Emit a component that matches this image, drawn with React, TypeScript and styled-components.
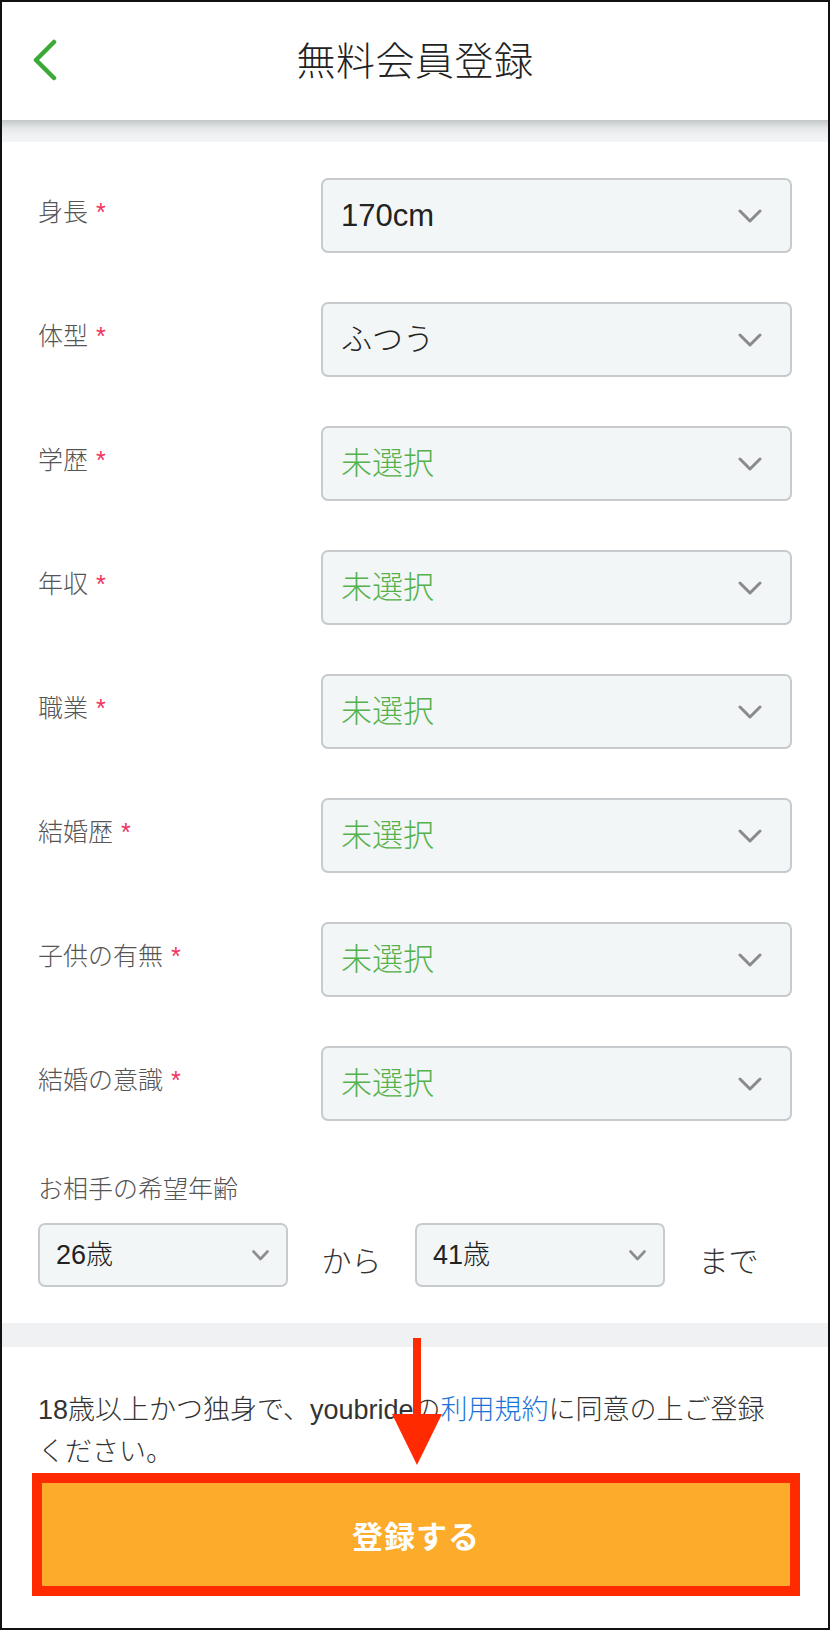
import styled, { createGlobalStyle } from 'styled-components'

const GlobalStyle = createGlobalStyle`
  * {
    box-sizing: border-box;
  }
  body {
    margin: 0;
    background: #fff;
    font-family: 'Liberation Sans', 'Noto Sans CJK JP', sans-serif;
  }
`

const Frame = styled.div`
  position: relative;
  width: 830px;
  height: 1630px;
  border: 2px solid #111;
  background: #fff;
  display: flex;
  flex-direction: column;
  overflow: hidden;
`

const Header = styled.header`
  height: 118px;
  display: grid;
  grid-template-columns: 1fr auto 1fr;
  align-items: center;
  padding-bottom: 6px;
`

const BackButton = styled.button`
  justify-self: start;
  margin-left: 29px;
  margin-top: 4px;
  padding: 0;
  border: none;
  background: none;
  display: flex;
`

const Title = styled.h1`
  margin: 0;
  font-size: 39px;
  font-weight: 300;
  color: #222;
  letter-spacing: 0.5px;
`

const ShadowBand = styled.div`
  height: 22px;
  background: linear-gradient(#c3c7c8 0%, #e3e6e7 35%, #eff1f2 70%, #f3f4f5 100%);
`

const Form = styled.div`
  padding: 36px 36px 0;
  display: grid;
  grid-template-columns: 283px 1fr;
  row-gap: 49px;
`

const Label = styled.div`
  align-self: center;
  padding-bottom: 6px;
  font-size: 25px;
  font-weight: 300;
  line-height: 1;
  color: #555;
`

const Required = styled.span`
  margin-left: 8px;
  color: #f0325c;
`

const Select = styled.div<{ $size: 'lg' | 'sm' }>`
  height: ${(p) => (p.$size === 'lg' ? '75px' : '64px')};
  display: flex;
  align-items: center;
  justify-content: space-between;
  padding: ${(p) => (p.$size === 'lg' ? '0 28px 0 18px' : '0 17px 0 16px')};
  background: #f3f6f7;
  border: 2px solid #c7cbce;
  border-radius: 7px;
`

const SelectValue = styled.span<{ $size: 'lg' | 'sm'; $empty?: boolean }>`
  font-size: ${(p) => (p.$size === 'lg' ? '31px' : '27px')};
  font-weight: 300;
  color: ${(p) => (p.$empty ? '#55b14b' : '#222')};
  line-height: 1;
`

const AgeSection = styled.div`
  padding: 50px 36px 36px;
  display: flex;
  flex-direction: column;
  gap: 16px;
`

const AgeLabel = styled.div`
  font-size: 25px;
  font-weight: 300;
  line-height: 36px;
  color: #555;
`

const AgeRow = styled.div`
  display: grid;
  grid-template-columns: 250px 1fr 250px 1fr;
  align-items: center;
`

const Joiner = styled.span`
  text-align: center;
  font-size: 30px;
  font-weight: 300;
  color: #333;
  padding-top: 8px;
`

const GrayBand = styled.div`
  height: 24px;
  background: #f0f1f3;
`

const Notice = styled.p`
  margin: 0;
  padding: 42px 36px 0;
  font-size: 27px;
  font-weight: 300;
  line-height: 42px;
  color: #333;
`

const TermsLink = styled.a`
  color: #1a74d8;
  text-decoration: none;
`

const SubmitButton = styled.button`
  margin: 0 28px 0 30px;
  height: 123px;
  border: 10px solid #ff2a00;
  background: #fcab2a;
  color: #fff;
  font-family: 'Liberation Sans', 'Noto Sans CJK JP', sans-serif;
  font-size: 31px;
  font-weight: 700;
  letter-spacing: 1px;
`

const Arrow = styled.svg`
  position: absolute;
  left: 390px;
  top: 1336px;
`

function Chevron({ small }: { small?: boolean }) {
  return small ? (
    <svg width="17" height="11" viewBox="0 0 17 11">
      <polyline points="1.5,1.5 8.5,9 15.5,1.5" fill="none" stroke="#8d8d8d" strokeWidth="2.6" strokeLinecap="round" strokeLinejoin="round" />
    </svg>
  ) : (
    <svg width="24" height="14" viewBox="0 0 24 14">
      <polyline points="2,2 12,12 22,2" fill="none" stroke="#8a8a8a" strokeWidth="3" strokeLinecap="round" strokeLinejoin="round" />
    </svg>
  )
}

const fields = [
  { label: '身長', value: '170cm' },
  { label: '体型', value: 'ふつう' },
  { label: '学歴', value: '' },
  { label: '年収', value: '' },
  { label: '職業', value: '' },
  { label: '結婚歴', value: '' },
  { label: '子供の有無', value: '' },
  { label: '結婚の意識', value: '' },
]

export default function App() {
  return (
    <>
      <GlobalStyle />
      <Frame>
        <Header>
          <BackButton aria-label="戻る">
            <svg width="28" height="42" viewBox="0 0 28 42">
              <polyline points="23,3 5,21 23,39" fill="none" stroke="#3aa935" strokeWidth="4.5" strokeLinecap="round" strokeLinejoin="round" />
            </svg>
          </BackButton>
          <Title>無料会員登録</Title>
          <span />
        </Header>
        <ShadowBand />

        <Form>
          {fields.map((f) => (
            <>
              <Label key={f.label + '-l'}>
                {f.label}
                <Required>*</Required>
              </Label>
              <Select key={f.label + '-s'} $size="lg">
                <SelectValue $size="lg" $empty={!f.value}>
                  {f.value || '未選択'}
                </SelectValue>
                <Chevron />
              </Select>
            </>
          ))}
        </Form>

        <AgeSection>
          <AgeLabel>お相手の希望年齢</AgeLabel>
          <AgeRow>
            <Select $size="sm">
              <SelectValue $size="sm">26歳</SelectValue>
              <Chevron small />
            </Select>
            <Joiner>から</Joiner>
            <Select $size="sm">
              <SelectValue $size="sm">41歳</SelectValue>
              <Chevron small />
            </Select>
            <Joiner>まで</Joiner>
          </AgeRow>
        </AgeSection>

        <GrayBand />

        <Notice>
          18歳以上かつ独身で、youbrideの<TermsLink href="#">利用規約</TermsLink>に同意の上ご登録
          <br />
          ください。
        </Notice>

        <SubmitButton>登録する</SubmitButton>

        <Arrow width="50" height="127" viewBox="0 0 50 127">
          <rect x="21" y="0" width="8" height="78" fill="#ff2a00" />
          <polygon points="0,76 50,76 25,127" fill="#ff2a00" />
        </Arrow>
      </Frame>
    </>
  )
}
